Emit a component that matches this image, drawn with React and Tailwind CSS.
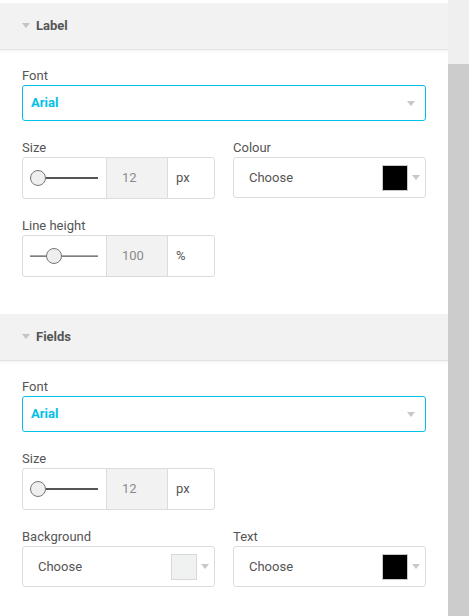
import React from 'react'

const Caret = ({ className = '' }) => (
  <svg width="8" height="5" viewBox="0 0 8 5" className={className}>
    <path d="M0 0 L8 0 L4 5 Z" fill="currentColor" />
  </svg>
)

const SectionHeader = ({ title }) => (
  <div className="h-[47px] bg-[#f2f2f2] border-b border-[#e2e2e2] shadow-[0_2px_2px_rgba(0,0,0,0.04)] flex items-center pl-[22px] pb-[2px]">
    <Caret className="text-[#c4c4c4] mr-[6px]" />
    <span className="text-[13px] font-bold text-[#555] leading-none">{title}</span>
  </div>
)

const FieldLabel = ({ children }) => (
  <div className="h-[20px] flex items-center text-[13px] text-[#555] leading-none">{children}</div>
)

const FontSelect = () => (
  <div className="h-[36px] border border-[#00c0e8] rounded-[3px] flex items-center justify-between pl-[8px] pr-[10px]">
    <span className="text-[13px] font-bold text-[#00c0e8]">Arial</span>
    <Caret className="text-[#c8c8c8]" />
  </div>
)

const SliderInput = ({ knob, value, unit }) => (
  <div className="w-[193px] h-[42px] border border-[#dcdcdc] rounded-[3px] flex overflow-hidden">
    <div className="w-[84px] flex items-center justify-center border-r border-[#dcdcdc]">
      <svg width="70" height="18" viewBox="0 0 70 18">
        <line x1="0" y1="9" x2="68" y2="9" stroke="#555" strokeWidth={knob === 0 ? 2 : 1.25} />
        <circle cx={knob + 8} cy="9" r="7.5" fill="#efefef" stroke="#777" strokeWidth="1" />
      </svg>
    </div>
    <div className="w-[61px] bg-[#f2f2f2] border-r border-[#dcdcdc] flex items-center pl-[15px] text-[13px] text-[#8a8a8a]">
      {value}
    </div>
    <div className="flex-1 flex items-center pl-[8px] text-[13px] text-[#555]">{unit}</div>
  </div>
)

const ColourPicker = ({ swatch }) => (
  <div className="w-[193px] h-[41px] border border-[#dcdcdc] rounded-[3px] flex items-center pl-[15px] pr-[5px]">
    <span className="flex-1 text-[13px] text-[#555]">Choose</span>
    <span className={`w-[26px] h-[26px] border ${swatch}`} />
    <Caret className="text-[#c8c8c8] ml-[4px]" />
  </div>
)

export default function App() {
  return (
    <div className="w-[469px] h-[616px] overflow-hidden bg-white flex" style={{ fontFamily: 'Roboto, "Noto Sans", sans-serif' }}>
      <div className="w-[448px] pt-[3px]">
        {/* Label section */}
        <SectionHeader title="Label" />
        <div className="px-[22px] pt-[15px] pb-[37px] flex flex-col">
          <FieldLabel>Font</FieldLabel>
          <FontSelect />
          <div className="flex gap-[18px] mt-[16px]">
            <div>
              <FieldLabel>Size</FieldLabel>
              <SliderInput knob={0} value="12" unit="px" />
            </div>
            <div>
              <FieldLabel>Colour</FieldLabel>
              <ColourPicker swatch="bg-black border-[#c8c8c8]" />
            </div>
          </div>
          <div className="mt-[16px]">
            <FieldLabel>Line height</FieldLabel>
            <SliderInput knob={16} value="100" unit="%" />
          </div>
        </div>

        {/* Fields section */}
        <SectionHeader title="Fields" />
        <div className="px-[22px] pt-[15px] flex flex-col">
          <FieldLabel>Font</FieldLabel>
          <FontSelect />
          <div className="mt-[16px]">
            <FieldLabel>Size</FieldLabel>
            <SliderInput knob={0} value="12" unit="px" />
          </div>
          <div className="flex gap-[18px] mt-[16px]">
            <div>
              <FieldLabel>Background</FieldLabel>
              <ColourPicker swatch="bg-[#f0f1f1] border-[#d8d8d8]" />
            </div>
            <div>
              <FieldLabel>Text</FieldLabel>
              <ColourPicker swatch="bg-black border-[#c8c8c8]" />
            </div>
          </div>
        </div>
      </div>
      {/* scrollbar */}
      <div className="w-[21px] bg-[#efefef] flex flex-col">
        <div className="h-[64px]" />
        <div className="flex-1 bg-[#cccccc]" />
      </div>
    </div>
  )
}
